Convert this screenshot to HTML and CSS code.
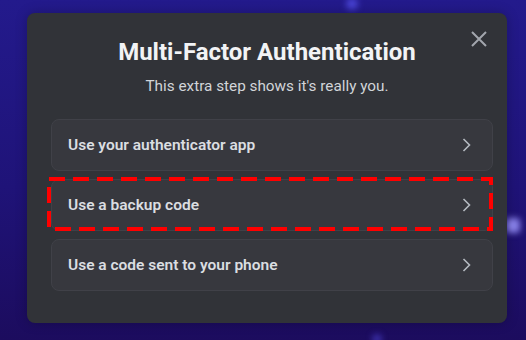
FILE: index.html
```html
<!DOCTYPE html>
<html lang="en">
<head>
<meta charset="utf-8">
<title>Multi-Factor Authentication</title>
<link rel="stylesheet" href="styles.css">
</head>
<body>
  <div class="glow glow-top"></div>
  <div class="glow glow-right"></div>
  <div class="glow glow-bottom"></div>
  <div class="modal">
    <button class="close" aria-label="Close">
      <svg width="24" height="24" viewBox="0 0 24 24"><path d="M5 5L19 19M19 5L5 19" stroke="currentColor" stroke-width="2" fill="none"/></svg>
    </button>
    <h1 class="title">Multi-Factor Authentication</h1>
    <p class="subtitle">This extra step shows it's really you.</p>
    <div class="options">
      <div class="option">
        <span class="label">Use your authenticator app</span>
        <svg class="chev" width="24" height="24" viewBox="0 0 24 24"><path d="M9.5 6l6 6-6 6" stroke="currentColor" stroke-width="1.6" fill="none"/></svg>
      </div>
      <div class="option highlighted">
        <span class="label">Use a backup code</span>
        <svg class="chev" width="24" height="24" viewBox="0 0 24 24"><path d="M9.5 6l6 6-6 6" stroke="currentColor" stroke-width="1.6" fill="none"/></svg>
        <svg class="dash" width="446" height="54" viewBox="0 0 446 54"><rect x="2" y="2" width="442" height="50" fill="none" stroke="#ff0000" stroke-width="4" stroke-dasharray="16 8"/></svg>
      </div>
      <div class="option">
        <span class="label">Use a code sent to your phone</span>
        <svg class="chev" width="24" height="24" viewBox="0 0 24 24"><path d="M9.5 6l6 6-6 6" stroke="currentColor" stroke-width="1.6" fill="none"/></svg>
      </div>
    </div>
  </div>
</body>
</html>
```

FILE: styles.css
```css
html, body {
  margin: 0;
  padding: 0;
  width: 526px;
  height: 340px;
  overflow: hidden;
}

body {
  background: linear-gradient(180deg, #231a8c 0%, #1f1378 55%, #1c0c5e 100%);
  font-family: Roboto, "Liberation Sans", sans-serif;
  position: relative;
  padding: 13px 0 0 27px;
  box-sizing: border-box;
}

.glow {
  position: absolute;
  border-radius: 50%;
  filter: blur(3px);
}

.glow-top {
  left: 346px;
  top: -2px;
  width: 12px;
  height: 12px;
  background: #4a44d6;
}

.glow-right {
  left: 506px;
  top: 218px;
  width: 14px;
  height: 15px;
  border-radius: 4px;
  background: #8a83ec;
}

.glow-bottom {
  left: 372px;
  top: 334px;
  width: 10px;
  height: 10px;
  background: #3b2fa8;
}

.modal {
  position: relative;
  width: 480px;
  background: #313338;
  border-radius: 8px;
  padding: 24px 14px 32px 24px;
  box-sizing: border-box;
  box-shadow: 0 0 12px rgba(0, 0, 0, 0.25);
}

.close {
  position: absolute;
  top: 14px;
  right: 16px;
  width: 24px;
  height: 24px;
  padding: 0;
  border: 0;
  background: none;
  color: #a2a6ad;
  display: flex;
}

.title {
  margin: 0 -14px 0 -24px;
  text-align: center;
  font-size: 24px;
  line-height: 30px;
  font-weight: 700;
  color: #f2f3f5;
}

.subtitle {
  margin: 9px -14px 0 -24px;
  text-align: center;
  font-size: 15.3px;
  line-height: 20px;
  color: #d2d5d9;
}

.options {
  margin-top: 23px;
  display: flex;
  flex-direction: column;
  gap: 8px;
}

.option {
  position: relative;
  height: 52px;
  box-sizing: border-box;
  display: flex;
  align-items: center;
  padding: 0 14px 0 16px;
  background: #37383e;
  border: 1px solid #404148;
  border-radius: 8px;
}

.label {
  font-size: 15.5px;
  font-weight: 600;
  color: #dbdee1;
}

.chev {
  margin-left: auto;
  color: #b5bac1;
}

.dash {
  position: absolute;
  left: -5px;
  top: -3px;
}
```
